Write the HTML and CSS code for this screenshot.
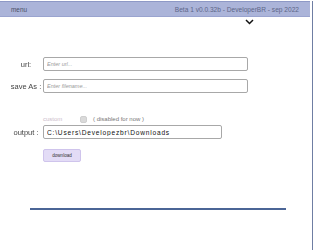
FILE: index.html
```html
<!DOCTYPE html>
<html>
<head>
<meta charset="utf-8">
<link rel="stylesheet" href="styles.css">
</head>
<body>
<div class="page">
  <header class="topbar">
    <span class="menu">menu</span>
    <span class="version">Beta 1 v0.0.32b - DeveloperBR - sep 2022</span>
  </header>
  <div class="chev-row">
    <svg class="chev" width="9" height="6" viewBox="0 0 9 6"><path d="M1 1 L4.5 4.5 L8 1" fill="none" stroke="#111" stroke-width="1.5"/></svg>
  </div>
  <div class="form">
    <div class="row">
      <span class="lbl">url:</span>
      <input class="field wide" type="text" placeholder="Enter url...">
    </div>
    <div class="row">
      <span class="lbl">save As :</span>
      <input class="field wide" type="text" placeholder="Enter filename...">
    </div>
    <div class="row custom-row">
      <span class="custom">custom</span>
      <span class="check"></span>
      <span class="note">( disabled for now )</span>
    </div>
    <div class="row">
      <span class="lbl">output :</span>
      <input class="field out" type="text" value="C:\Users\Developezbr\Downloads">
    </div>
    <div class="row btn-row">
      <button type="button" class="dl">download</button>
    </div>
  </div>
  <div class="rule"></div>
</div>
</body>
</html>
```
FILE: styles.css
```css
html, body {
  margin: 0;
  padding: 0;
  background: #fff;
}
body {
  font-family: "Liberation Sans", Arial, sans-serif;
}
.page {
  width: 312px;
  height: 250px;
  border-right: 1px solid #6f7ea3;
  box-sizing: content-box;
}
.topbar {
  height: 14px;
  margin-top: 1px;
  width: 310px;
  background: #abb4d9;
  border-top: 1px solid #8e99c6;
  border-bottom: 1px solid #9aa4cf;
  display: flex;
  align-items: center;
  justify-content: space-between;
  box-sizing: content-box;
}
.menu {
  font-size: 6.4px;
  color: #4a4f66;
  margin-left: 11px;
}
.version {
  font-size: 6.6px;
  color: #5d6688;
  margin-right: 11px;
}
.chev-row {
  display: flex;
  justify-content: flex-end;
  padding-right: 58px;
  height: 8px;
  align-items: center;
  margin-top: 1px;
}
.form {
  display: flex;
  flex-direction: column;
  margin-top: 31px;
}
.row {
  display: flex;
  align-items: center;
  height: 14px;
  margin-bottom: 8px;
}
.lbl {
  width: 34px;
  margin-left: 9px;
  text-align: center;
  font-size: 7.5px;
  color: #444;
  white-space: nowrap;
  will-change: transform;
}
.field {
  height: 14px;
  box-sizing: border-box;
  border: 1px solid #a8a8a8;
  border-radius: 2px;
  font-family: "Liberation Sans", Arial, sans-serif;
  padding: 0 3px;
  background: #fff;
  outline: none;
}
.wide {
  width: 205px;
  font-size: 5.5px;
  font-style: italic;
}
.wide::placeholder {
  font-style: italic;
  color: #9a9a9a;
}
.out {
  width: 179px;
  font-size: 6.6px;
  letter-spacing: 0.8px;
  color: #111;
}
.custom-row {
  margin-top: 13px;
  margin-bottom: 1px;
  height: 10px;
  padding-left: 43px;
}
.custom {
  font-size: 6px;
  color: #cbbccb;
  width: 37px;
}
.check {
  width: 7px;
  height: 7px;
  background: #dadada;
  border: 1px solid #cfcfcf;
  box-sizing: border-box;
  border-radius: 2px;
  margin-right: 6px;
}
.note {
  font-size: 6px;
  color: #777;
}
.btn-row {
  padding-left: 43px;
  margin-top: 1px;
}
.dl {
  width: 38px;
  height: 13px;
  background: #e3dcf6;
  border: 1px solid #cfc4ec;
  border-radius: 2px;
  font-family: "Liberation Sans", Arial, sans-serif;
  font-size: 4.6px;
  color: #333;
  padding: 0;
}
.rule {
  margin: 38px 0 0 30px;
  width: 256px;
  height: 2px;
  background: #4b6596;
}
```
